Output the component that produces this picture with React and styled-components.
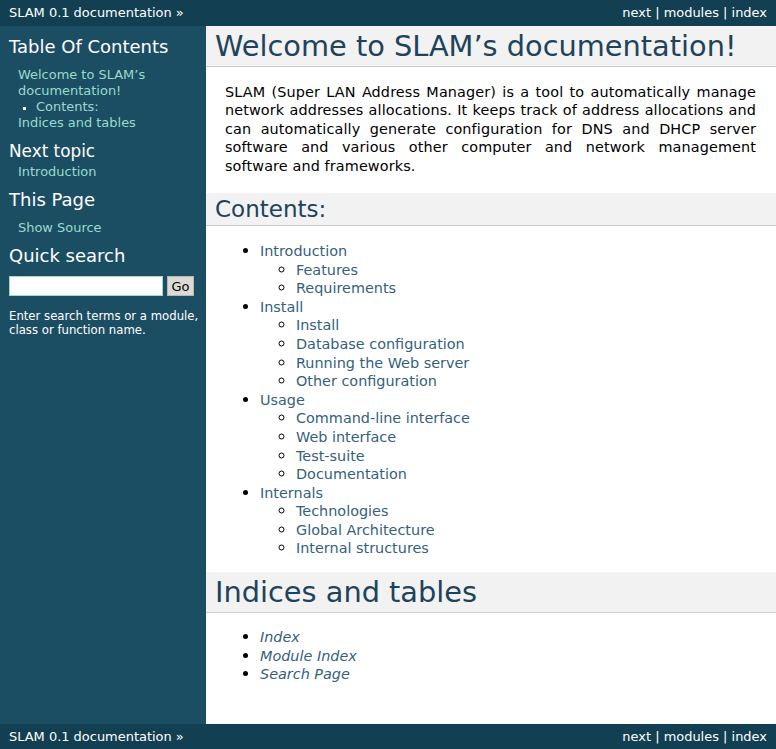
import styled, { createGlobalStyle } from 'styled-components';

const GlobalStyle = createGlobalStyle`
	html, body {
		margin: 0;
		padding: 0;
		background-color: #1c4e63;
		font-family: 'DejaVu Sans', 'Liberation Sans', sans-serif;
		font-size: 14.4px;
	}
	* {
		box-sizing: border-box;
	}
`;

const toc = [
	{ title: 'Introduction', children: ['Features', 'Requirements'] },
	{
		title: 'Install',
		children: [
			'Install',
			'Database configuration',
			'Running the Web server',
			'Other configuration',
		],
	},
	{
		title: 'Usage',
		children: [
			'Command-line interface',
			'Web interface',
			'Test-suite',
			'Documentation',
		],
	},
	{
		title: 'Internals',
		children: ['Technologies', 'Global Architecture', 'Internal structures'],
	},
];

function RelatedBar({ height }) {
	return (
		<Related $height={height}>
			<RelLink href="#">SLAM 0.1 documentation</RelLink>&nbsp;»
			<RelRight>
				<RelLink href="#">next</RelLink> | <RelLink href="#">modules</RelLink>{' '}
				| <RelLink href="#">index</RelLink>
			</RelRight>
		</Related>
	);
}

function App() {
	return (
		<>
			<GlobalStyle />
			<RelatedBar height={26} />
			<Main>
				<Sidebar>
					<SideTitle>Table Of Contents</SideTitle>
					<SideList>
						<li>
							<SideLink href="#">Welcome to SLAM’s documentation!</SideLink>
							<SubList>
								<li>
									<SideLink href="#">Contents:</SideLink>
								</li>
							</SubList>
						</li>
						<li>
							<SideLink href="#">Indices and tables</SideLink>
						</li>
					</SideList>
					<SideSub>Next topic</SideSub>
					<Topless>
						<SideLink href="#">Introduction</SideLink>
					</Topless>
					<SideTitle>This Page</SideTitle>
					<SideList $bottom="9px">
						<li>
							<SideLink href="#">Show Source</SideLink>
						</li>
					</SideList>
					<SideTitle>Quick search</SideTitle>
					<SearchForm>
						<SearchInput type="text" />
						<GoButton type="button">Go</GoButton>
					</SearchForm>
					<SearchTip>
						Enter search terms or a module, class or function name.
					</SearchTip>
				</Sidebar>
				<Body>
					<Heading $size="28.8px" $top="0px">
						Welcome to SLAM’s documentation!
					</Heading>
					<Para>
						SLAM (Super LAN Address Manager) is a tool to automatically manage
						network addresses allocations. It keeps track of address
						allocations and can automatically generate configuration for DNS
						and DHCP server software and various other computer and network
						management software and frameworks.
					</Para>
					<Heading as="h2" $size="23px" $top="17.5px">
						Contents:
					</Heading>
					<List>
						{toc.map((item) => (
							<Item key={item.title}>
								<Link href="#">{item.title}</Link>
								<Nested>
									{item.children.map((child) => (
										<Item key={child}>
											<Link href="#">{child}</Link>
										</Item>
									))}
								</Nested>
							</Item>
						))}
					</List>
					<Heading $size="28.8px" $top="14px">
						Indices and tables
					</Heading>
					<List $top="15px">
						<Item>
							<Link href="#">
								<em>Index</em>
							</Link>
						</Item>
						<Item>
							<Link href="#">
								<em>Module Index</em>
							</Link>
						</Item>
						<Item>
							<Link href="#">
								<em>Search Page</em>
							</Link>
						</Item>
					</List>
				</Body>
			</Main>
			<RelatedBar height={25} />
		</>
	);
}

const Related = styled.div`
	background-color: #133f52;
	color: #fff;
	height: ${(p) => p.$height}px;
	line-height: ${(p) => p.$height}px;
	font-size: 12.96px;
	padding: 0 9px;
	display: flex;
	align-items: center;
	white-space: pre;
`;

const RelRight = styled.div`
	margin-left: auto;
`;

const RelLink = styled.a`
	color: #fff;
	text-decoration: none;
`;

const Main = styled.div`
	display: flex;
	align-items: stretch;
`;

const Sidebar = styled.div`
	width: 206px;
	flex-shrink: 0;
	background-color: #1c4e63;
	color: #fff;
	padding: 10px 5px 0 9px;
	font-size: 12.96px;
`;

const SideTitle = styled.h3`
	font-size: 18px;
	font-weight: normal;
	color: #fff;
	margin: 0;
	line-height: 21px;
`;

const SideSub = styled.h4`
	font-size: 16.85px;
	font-weight: normal;
	color: #fff;
	margin: 0;
	line-height: 20px;
`;

const SideList = styled.ul`
	list-style: none;
	margin: 10px 9px ${(p) => p.$bottom || '10px'} 9px;
	padding: 0;
	line-height: 16px;
	li {
		margin: 0;
	}
`;

const SubList = styled.ul`
	list-style: square;
	margin: 0 0 0 18px;
	padding: 0;
	li::marker {
		color: #fff;
		font-size: 11px;
	}
`;

const SideLink = styled.a`
	color: #98dbcc;
	text-decoration: none;
`;

const Topless = styled.p`
	margin: 3px 9px 10px 9px;
	line-height: 15px;
`;

const SearchForm = styled.form`
	display: flex;
	align-items: center;
	gap: 4px;
	margin: 10px 0 0 0;
`;

const SearchInput = styled.input`
	width: 154px;
	height: 20px;
	border: 1px solid #98dbcc;
	background: #fff;
	padding: 0 2px;
	margin: 0;
	font-family: inherit;
	font-size: 13px;
`;

const GoButton = styled.button`
	width: 27px;
	height: 20px;
	padding: 0;
	margin: 0;
	border: 1px solid #b9b7b2;
	background: #dcdad5;
	color: #000;
	font-family: inherit;
	font-size: 13px;
`;

const SearchTip = styled.p`
	font-size: 11.7px;
	line-height: 14px;
	margin: 13px 0 0 0;
	color: #fff;
`;

const Body = styled.div`
	flex: 1;
	background-color: #fff;
	color: #000;
	padding: 0 20px 40px 19px;
	display: flow-root;
`;

const Heading = styled.h1`
	background-color: #f2f2f2;
	color: #20435c;
	font-weight: normal;
	font-size: ${(p) => p.$size};
	border-bottom: 1px solid #ccc;
	margin: ${(p) => p.$top} -20px 0 -19px;
	padding: 3px 0 3px 9px;
`;

const Para = styled.p`
	margin: 15.5px 0 0 0;
	text-align: justify;
	line-height: 18.6px;
	letter-spacing: 0.12px;
`;

const List = styled.ul`
	margin: ${(p) => p.$top || '16px'} 0 0 0;
	padding-left: 35px;
	list-style: disc;
`;

const Nested = styled.ul`
	margin: 0;
	padding-left: 36px;
	list-style: circle;
`;

const Item = styled.li`
	line-height: 18.6px;
	&::marker {
		font-size: 16px;
	}
`;

const Link = styled.a`
	color: #355f7c;
	text-decoration: none;
`;

export default App;
